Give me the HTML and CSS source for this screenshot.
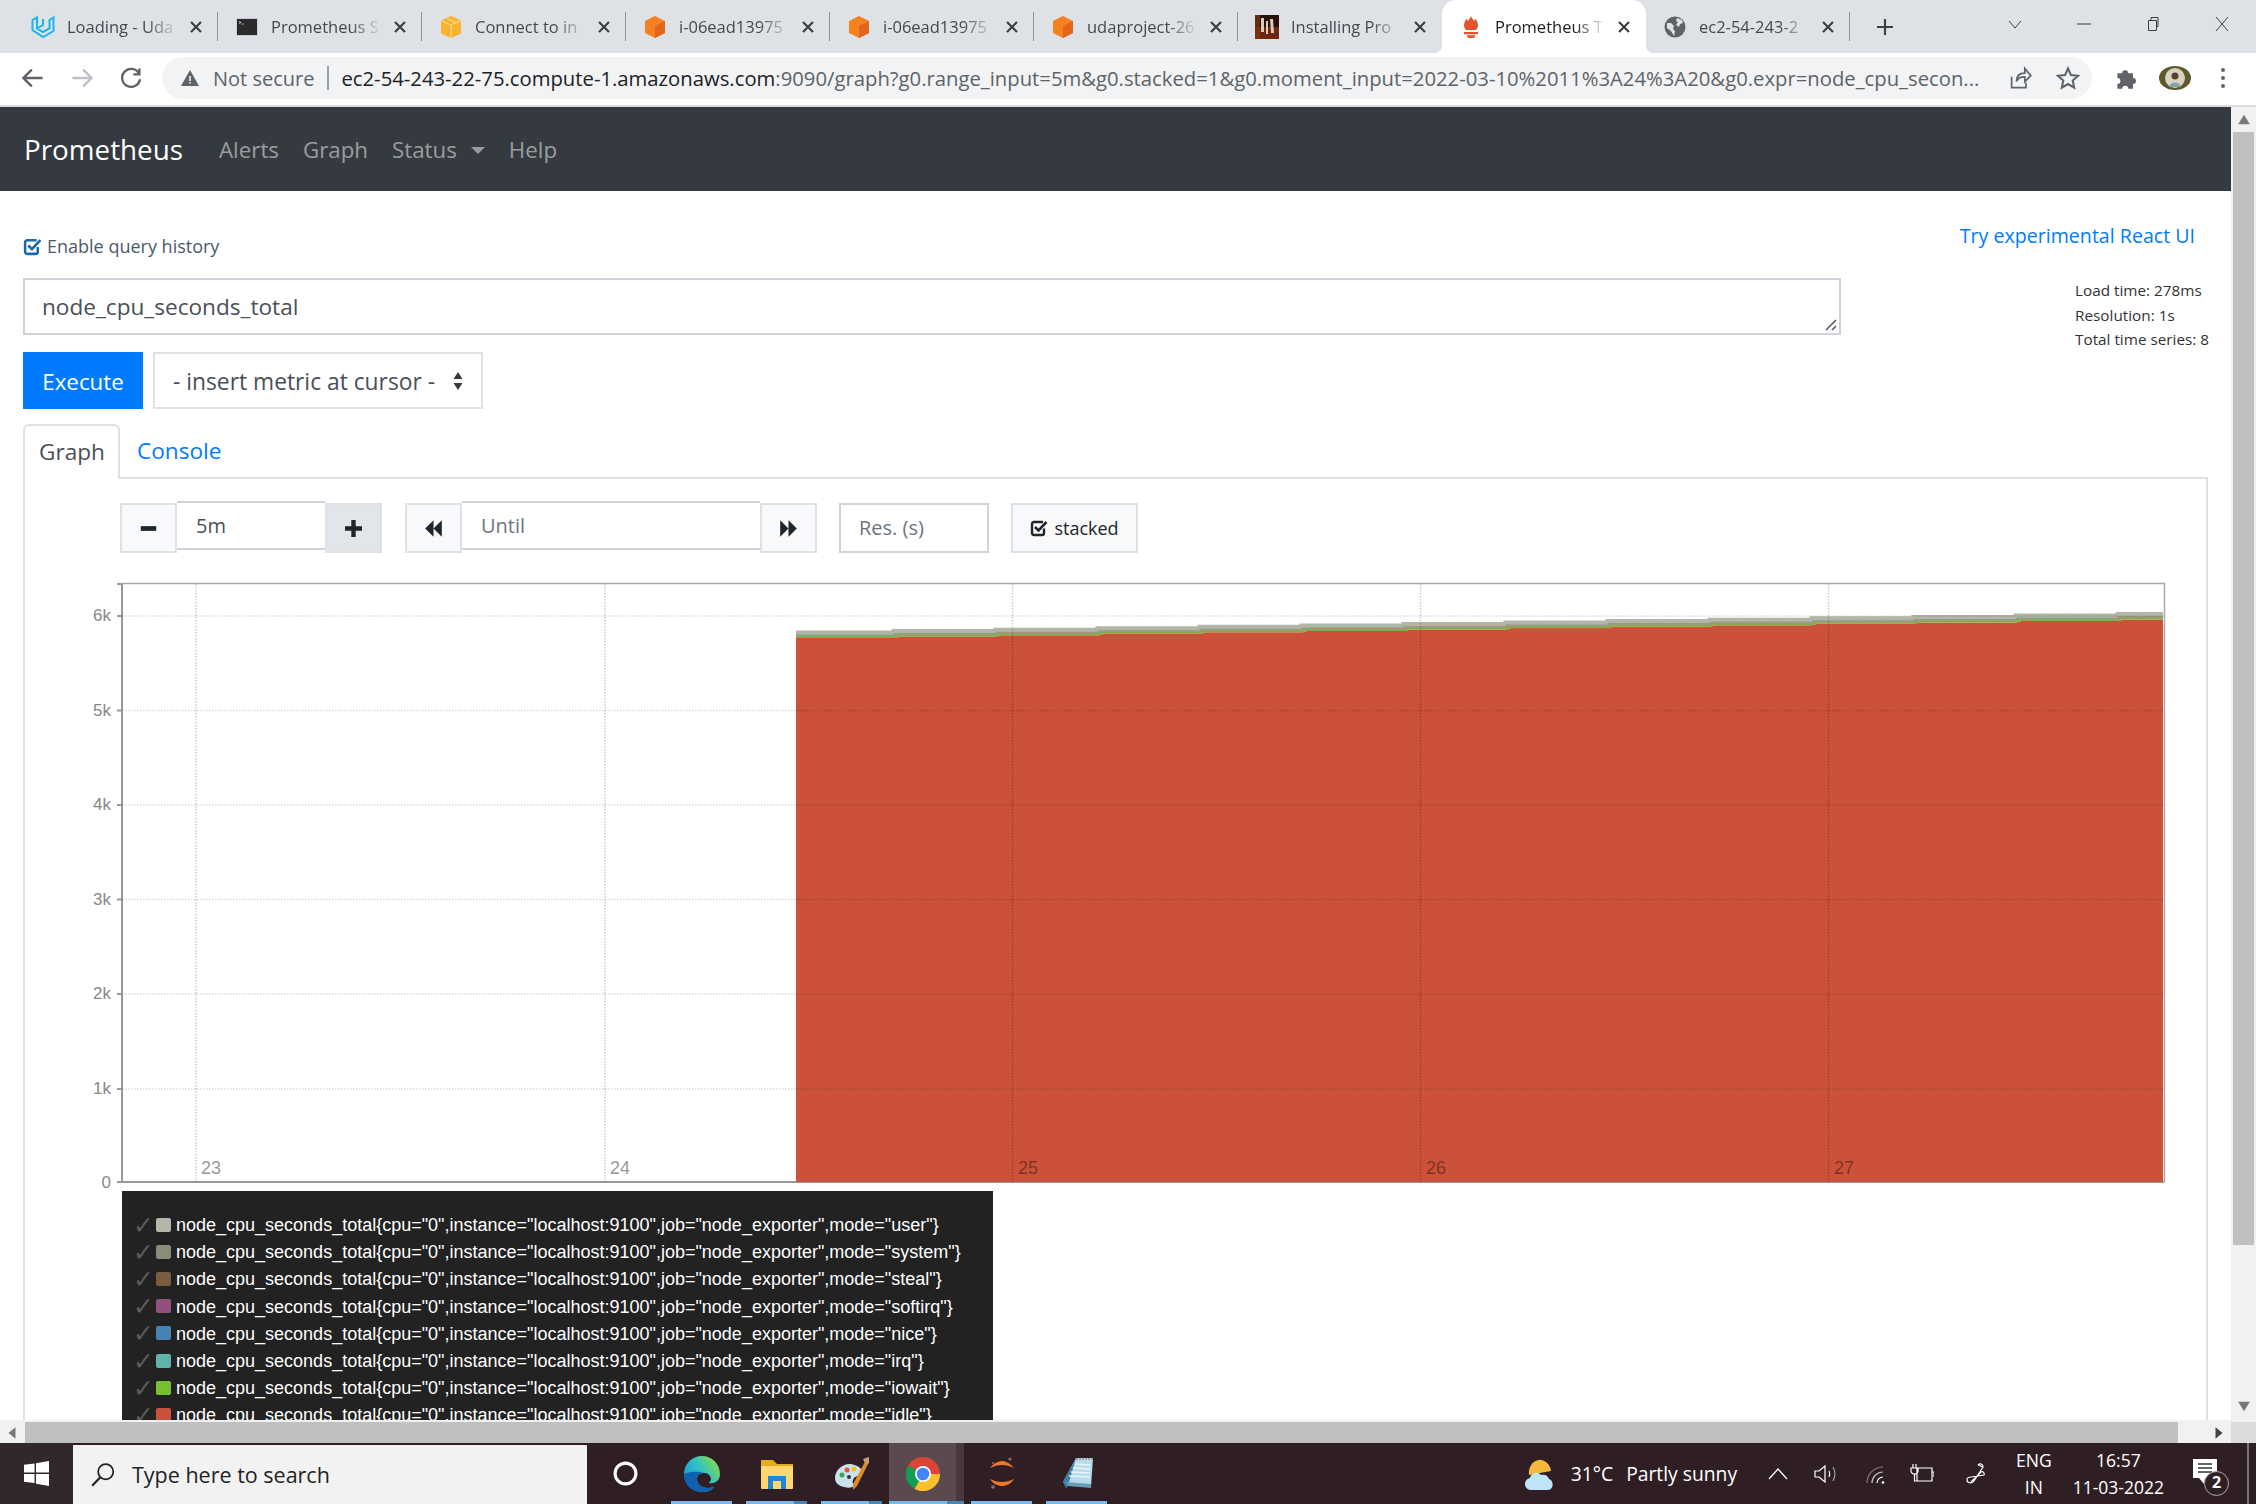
FILE: index.html
```html
<!DOCTYPE html>
<html lang="en">
<head>
    <meta charset="UTF-8">
    <title>Prometheus Time Series Collection and Processing Server</title>
    <link rel="stylesheet" href="styles.css">
</head>
<body>
    <!-- browser tabs -->
    <div class="tabstrip">
        <div class="tab">
            <svg class="favicon" viewBox="0 0 24 24"><path d="M1.500 5v10l10.500 7 10.500-6V2.500l-4 2.500v8.500L12 17l-6-3.500V2.500z M6 13.500l6-3.500V4" fill="none" stroke="#18b6e8" stroke-width="2"/></svg>
            <span class="tab-title">Loading - Uda</span>
            <svg class="tab-close" viewBox="0 0 12 12"><path d="M1 1l10 10m0-10L1 11"/></svg>
        </div>
        <div class="tab">
            <svg class="favicon" viewBox="0 0 24 24"><rect x="1.500" y="3.500" width="21" height="17" fill="#2b2b2b" stroke="#c9ccd1"/><path d="M4 6.500l2 1-2 1M6.500 9h2" fill="none" stroke="#ddd" stroke-width=".8"/></svg>
            <span class="tab-title">Prometheus S</span>
            <svg class="tab-close" viewBox="0 0 12 12"><path d="M1 1l10 10m0-10L1 11"/></svg>
        </div>
        <div class="tab">
            <svg class="favicon" viewBox="0 0 24 24"><path d="M12 1l10 4.500v13L12 23 2 18.500v-13z" fill="#f5b32e"/><path d="M2 5.500L12 10l10-4.500M8 3.500l9 4.200M12 10v13" fill="none" stroke="#fbdd8f" stroke-width="1.100"/></svg>
            <span class="tab-title">Connect to in</span>
            <svg class="tab-close" viewBox="0 0 12 12"><path d="M1 1l10 10m0-10L1 11"/></svg>
        </div>
        <div class="tab">
            <svg class="favicon" viewBox="0 0 24 24"><path d="M12 1l10 5v12l-10 5-10-5V6z" fill="#f58220"/><path d="M12 11l10-5v12l-10 5z" fill="#e4661c"/></svg>
            <span class="tab-title">i-06ead13975</span>
            <svg class="tab-close" viewBox="0 0 12 12"><path d="M1 1l10 10m0-10L1 11"/></svg>
        </div>
        <div class="tab">
            <svg class="favicon" viewBox="0 0 24 24"><path d="M12 1l10 5v12l-10 5-10-5V6z" fill="#f58220"/><path d="M12 11l10-5v12l-10 5z" fill="#e4661c"/></svg>
            <span class="tab-title">i-06ead13975</span>
            <svg class="tab-close" viewBox="0 0 12 12"><path d="M1 1l10 10m0-10L1 11"/></svg>
        </div>
        <div class="tab">
            <svg class="favicon" viewBox="0 0 24 24"><path d="M12 1l10 5v12l-10 5-10-5V6z" fill="#f58220"/><path d="M12 11l10-5v12l-10 5z" fill="#e4661c"/></svg>
            <span class="tab-title">udaproject-26</span>
            <svg class="tab-close" viewBox="0 0 12 12"><path d="M1 1l10 10m0-10L1 11"/></svg>
        </div>
        <div class="tab">
            <svg class="favicon" viewBox="0 0 24 24"><rect width="24" height="24" fill="#2a0f08"/><path d="M0 12h24v12H0z" fill="#6e2512"/><path d="M6 3h3v14H6zM11 6h2v13h-2zM15 4h3l1 14h-3z" fill="#d8cdb8"/><path d="M0 0h5v24H0z" fill="#7a3a14" opacity=".7"/></svg>
            <span class="tab-title">Installing Pro</span>
            <svg class="tab-close" viewBox="0 0 12 12"><path d="M1 1l10 10m0-10L1 11"/></svg>
        </div>
        <div class="tab active">
            <svg class="favicon" viewBox="0 0 24 24"><path d="M12 1c.5 2.500 2.500 3 3 5 .8-.5 1-1.500 1-2.500 2 2 3 4.500 3 7 0 1.700-.8 3-2 4.500H7c-1.200-1.500-2-2.800-2-4.500 0-2.500 1-5 3-7 0 1 .2 2 1 2.500 .5-2 2.500-2.500 3-5z" fill="#e6522c"/><path d="M5 17h14v2.200H5zM7.500 20.200h9L15 23H9z" fill="#e6522c"/></svg>
            <span class="tab-title">Prometheus T</span>
            <svg class="tab-close" viewBox="0 0 12 12"><path d="M1 1l10 10m0-10L1 11"/></svg>
        </div>
        <div class="tab">
            <svg class="favicon" viewBox="0 0 24 24"><circle cx="12" cy="12" r="10.500" fill="#5f6368"/><path d="M4 8l4 0 3 3-1 3 2 2-1 5-3-5-4-3zM14 3l5 2 1 3-3 1-1 3-3-2 2-3-2-1z" fill="#dee1e6"/></svg>
            <span class="tab-title">ec2-54-243-2</span>
            <svg class="tab-close" viewBox="0 0 12 12"><path d="M1 1l10 10m0-10L1 11"/></svg>
        </div>
        <svg class="new-tab" viewBox="0 0 18 18"><path d="M9 1v16M1 9h16"/></svg>
        <div class="window-controls">
            <svg viewBox="0 0 14 14"><path d="M1 4l6 7 6-7"/></svg>
            <svg viewBox="0 0 14 14"><path d="M0 7h14"/></svg>
            <svg viewBox="0 0 14 14"><path d="M2.500 3.500h8v10h-8zM5 3.500V.5h7v9h-1.500"/></svg>
            <svg viewBox="0 0 14 14"><path d="M1 0l12 14M13 0L1 14"/></svg>
        </div>
    </div>

    <!-- address bar -->
    <div class="toolbar">
        <svg class="tool-icon" viewBox="0 0 20 20"><path d="M18 10H3m6-7l-7 7 7 7" stroke="#5f6368"/></svg>
        <svg class="tool-icon" viewBox="0 0 20 20"><path d="M2 10h15m-6-7l7 7-7 7" stroke="#bdc1c6"/></svg>
        <svg class="tool-icon" viewBox="0 0 20 20"><path d="M16.500 6A7.500 7.500 0 1 0 17.500 11M17 2v5h-5" stroke="#5f6368"/></svg>
        <div class="omnibox">
            <svg class="warn-icon" viewBox="0 0 20 20"><path d="M10 2l9 16H1z" fill="#5f6368"/><path d="M9.200 8h1.600v5H9.200zM9.200 14h1.600v1.600H9.200z" fill="#f1f3f4"/></svg>
            <span class="not-secure">Not secure</span>
            <span class="omni-sep"></span>
            <span class="url"><b>ec2-54-243-22-75.compute-1.amazonaws.com</b>:9090/graph?g0.range_input=5m&amp;g0.stacked=1&amp;g0.moment_input=2022-03-10%2011%3A24%3A20&amp;g0.expr=node_cpu_secon...</span>
            <svg class="omni-icon share" viewBox="0 0 20 20"><path d="M3 9v9h12v-4M7 13c0-5 3-7 7-7V2l5 6-5 5V9c-3 0-6 1-7 4z" fill="none" stroke="#5f6368" stroke-width="1.400"/></svg>
            <svg class="omni-icon" viewBox="0 0 20 20"><path d="M10 2l2.400 5.500 6 .6-4.500 4 1.300 5.900-5.200-3-5.200 3 1.300-5.900-4.500-4 6-.6z" fill="none" stroke="#5f6368" stroke-width="1.700"/></svg>
        </div>
        <svg class="puzzle" viewBox="0 0 20 20"><path d="M2 6h4a2.500 2.500 0 1 1 5 0h4v4a2.500 2.500 0 1 1 0 5v4h-4a2.500 2.500 0 1 0-5 0H2v-4a2.500 2.500 0 1 0 0-5z" fill="#5f6368"/></svg>
        <svg class="avatar" viewBox="0 0 32 24"><ellipse cx="16" cy="12" rx="16" ry="12" fill="#5c5a2c"/><ellipse cx="16" cy="12" rx="10" ry="10" fill="#d8d3c0"/><circle cx="16" cy="10" r="3.500" fill="#57422d"/><path d="M10 21c1-6 11-6 12 0z" fill="#86a4a8"/></svg>
        <svg class="kebab" viewBox="0 0 6 24"><circle cx="3" cy="4" r="2"/><circle cx="3" cy="12" r="2"/><circle cx="3" cy="20" r="2"/></svg>
    </div>

    <div class="viewport">
        <div class="page">
            <nav class="navbar">
                <a class="brand">Prometheus</a>
                <a class="nav-link">Alerts</a>
                <a class="nav-link">Graph</a>
                <a class="nav-link status">Status<i class="caret"></i></a>
                <a class="nav-link">Help</a>
            </nav>

            <div class="content">
                <div class="top-row">
                    <label class="history">
                        <svg class="check-box" viewBox="0 0 18 18"><path d="M14 9.500V14a2 2 0 0 1-2 2H4a2 2 0 0 1-2-2V5a2 2 0 0 1 2-2h9" fill="none" stroke="currentColor" stroke-width="2.400"/><path d="M5 8l3.500 3.500L16.500 3" fill="none" stroke="currentColor" stroke-width="2.600"/></svg>
                        Enable query history
                    </label>
                    <a class="react-link">Try experimental React UI</a>
                </div>

                <div class="query-row">
                    <div class="query-left">
                        <div class="expr">node_cpu_seconds_total
                            <svg class="grip" viewBox="0 0 12 12"><path d="M1 11L11 1M7 11l4-4"/></svg>
                        </div>
                        <div class="exec-row">
                            <button class="execute">Execute</button>
                            <div class="metric-select">- insert metric at cursor -
                                <svg class="updown" viewBox="0 0 10 20"><path d="M5 1l4.500 7h-9zM5 19l4.500-7h-9z"/></svg>
                            </div>
                        </div>
                    </div>
                    <div class="stats">
                        <div>Load time: 278ms</div>
                        <div>Resolution: 1s</div>
                        <div>Total time series: 8</div>
                    </div>
                </div>

                <div class="nav-tabs">
                    <span class="tab-link active">Graph</span>
                    <span class="tab-link">Console</span>
                </div>

                <div class="tab-content">
                    <div class="controls">
                        <button class="ctl-btn">
                            <svg viewBox="0 0 16 14"><path d="M1.500 5h13v4h-13z"/></svg>
                        </button>
                        <div class="ctl-input range">5m</div>
                        <button class="ctl-btn hover">
                            <svg viewBox="0 0 14 14"><path d="M5.200 0h3.600v5.200H14v3.600H8.800V14H5.200V8.800H0V5.200h5.200z"/></svg>
                        </button>
                        <button class="ctl-btn gap">
                            <svg viewBox="0 0 16 14"><path d="M8 0v14L1 7zM15 0v14L8 7z"/></svg>
                        </button>
                        <div class="ctl-input until">Until</div>
                        <button class="ctl-btn">
                            <svg viewBox="0 0 16 14"><path d="M1 0v14l7-7zM8 0v14l7-7z"/></svg>
                        </button>
                        <div class="res-input">Res. (s)</div>
                        <button class="stacked">
                            <svg class="check-box" viewBox="0 0 18 18"><path d="M14 9.500V14a2 2 0 0 1-2 2H4a2 2 0 0 1-2-2V5a2 2 0 0 1 2-2h9" fill="none" stroke="currentColor" stroke-width="2.400"/><path d="M5 8l3.500 3.500L16.500 3" fill="none" stroke="currentColor" stroke-width="2.600"/></svg>
                            stacked
                        </button>
                    </div>

                    <!-- viewBox uses page coordinates -->
                    <svg class="chart" viewBox="80 575 2100 616">
                        <defs>
                            <path id="top-edge" d="M796 638H895V636.600H997V635.200H1099V633.700H1201V632.300H1303V630.900H1405V629.500H1507V628.100H1609V626.600H1711V625.200H1813V623.800H1915V622.400H2017V621H2119V619.500H2163"/>
                        </defs>
                        <path class="frame" d="M122 1182V583.500H2164.500V1182"/>
                        <path class="axis" d="M122 584V1182H2164M117 584h5M117 616h5M117 710.500h5M117 805h5M117 899.500h5M117 994h5M117 1089h5M117 1182h5"/>
                        <path class="area" d="M796 1182V638H895V636.600H997V635.200H1099V633.700H1201V632.300H1303V630.900H1405V629.500H1507V628.100H1609V626.600H1711V625.200H1813V623.800H1915V622.400H2017V621H2119V619.500H2163V1182z"/>
                        <use href="#top-edge" class="band-light" transform="translate(0,-4)"/>
                        <use href="#top-edge" class="band-dark" transform="translate(0,-2)"/>
                        <use href="#top-edge" class="band-green" transform="translate(0,-0.700)"/>
                        <g class="grid">
                            <path d="M122 616H2164M122 710.500H2164M122 805H2164M122 899.500H2164M122 994H2164M122 1089H2164"/>
                            <path d="M196 584V1182M605 584V1182M1012.500 584V1182M1420.500 584V1182M1828.500 584V1182"/>
                        </g>
                        <g class="y-labels">
                            <text x="111" y="621">6k</text>
                            <text x="111" y="716">5k</text>
                            <text x="111" y="810">4k</text>
                            <text x="111" y="905">3k</text>
                            <text x="111" y="999">2k</text>
                            <text x="111" y="1094">1k</text>
                            <text x="111" y="1188">0</text>
                        </g>
                        <g class="x-labels">
                            <text x="201" y="1174">23</text>
                            <text x="610" y="1174">24</text>
                            <text x="1018" y="1174">25</text>
                            <text x="1426" y="1174">26</text>
                            <text x="1834" y="1174">27</text>
                        </g>
                    </svg>

                    <div class="legend">
                        <div class="legend-row"><span class="tick">✓</span><i class="swatch s-user"></i>node_cpu_seconds_total{cpu="0",instance="localhost:9100",job="node_exporter",mode="user"}</div>
                        <div class="legend-row"><span class="tick">✓</span><i class="swatch s-system"></i>node_cpu_seconds_total{cpu="0",instance="localhost:9100",job="node_exporter",mode="system"}</div>
                        <div class="legend-row"><span class="tick">✓</span><i class="swatch s-steal"></i>node_cpu_seconds_total{cpu="0",instance="localhost:9100",job="node_exporter",mode="steal"}</div>
                        <div class="legend-row"><span class="tick">✓</span><i class="swatch s-softirq"></i>node_cpu_seconds_total{cpu="0",instance="localhost:9100",job="node_exporter",mode="softirq"}</div>
                        <div class="legend-row"><span class="tick">✓</span><i class="swatch s-nice"></i>node_cpu_seconds_total{cpu="0",instance="localhost:9100",job="node_exporter",mode="nice"}</div>
                        <div class="legend-row"><span class="tick">✓</span><i class="swatch s-irq"></i>node_cpu_seconds_total{cpu="0",instance="localhost:9100",job="node_exporter",mode="irq"}</div>
                        <div class="legend-row"><span class="tick">✓</span><i class="swatch s-iowait"></i>node_cpu_seconds_total{cpu="0",instance="localhost:9100",job="node_exporter",mode="iowait"}</div>
                        <div class="legend-row"><span class="tick">✓</span><i class="swatch s-idle"></i>node_cpu_seconds_total{cpu="0",instance="localhost:9100",job="node_exporter",mode="idle"}</div>
                    </div>
                </div>
            </div>
        </div>
        <div class="vscroll">
            <svg class="arrow" viewBox="0 0 12 12"><path d="M6 2l5 8H1z"/></svg>
            <div class="vthumb"></div>
            <svg class="arrow" viewBox="0 0 12 12"><path d="M6 10l5-8H1z"/></svg>
        </div>
    </div>

    <div class="hscroll">
        <svg class="arrow" viewBox="0 0 12 12"><path d="M3 6l6-5v10z"/></svg>
        <div class="hthumb"></div>
        <svg class="arrow right" viewBox="0 0 12 12"><path d="M9 6L3 1v10z"/></svg>
        <div class="corner"></div>
    </div>

    <!-- windows taskbar -->
    <div class="taskbar">
        <div class="start">
            <svg viewBox="0 0 26 26"><path d="M0 4l11-1.500V12H0zM12.500 2.300L26 0v12H12.500zM0 13.500h11V23L0 21.500zM12.500 13.500H26V26l-13.500-2.300z" fill="#fff"/></svg>
        </div>
        <div class="search">
            <svg viewBox="0 0 24 24"><circle cx="14.500" cy="9" r="7" fill="none" stroke="#222" stroke-width="1.600"/><path d="M9.500 14L2 22" stroke="#222" stroke-width="2"/></svg>
            <span>Type here to search</span>
        </div>
        <div class="apps">
            <div class="app cortana">
                <svg viewBox="0 0 24 24"><circle cx="12" cy="12" r="10" fill="none" stroke="#fff" stroke-width="3"/></svg>
            </div>
            <div class="app open">
                <svg viewBox="0 0 36 36">
                    <defs>
                        <linearGradient id="edge-top" x1="0" y1="1" x2="1" y2="0.300"><stop offset="0" stop-color="#1287d8"/><stop offset=".6" stop-color="#2fc1c9"/><stop offset="1" stop-color="#7fd84f"/></linearGradient>
                    </defs>
                    <path d="M18 0C8 0 0 8 0 18c0 11 9 18 18 18 6 0 10-2 12-5-9 3-17-1-17-8 0-4 3-6 7-6 6 0 7 5 7 6 0 2-2 3-2 4 4 1 11-1 11-9C36 8 28 0 18 0z" fill="url(#edge-top)"/>
                    <path d="M0 18c0 11 9 18 18 18 6 0 10-2 12-5-9 3-17-1-17-8 0-4 3-6 7-6-9-3-18 0-20 1z" fill="#0f62b0"/>
                </svg>
            </div>
            <div class="app open stack">
                <svg viewBox="0 0 36 36"><path d="M2 4h12l4 4h16v24H2z" fill="#e9a91f"/><path d="M2 10h32v22a1 1 0 0 1-1 1H3a1 1 0 0 1-1-1z" fill="#fcd772"/><path d="M9 33V20h18v13h-5v-8h-8v8z" fill="#1f87d6"/></svg>
            </div>
            <div class="app open stack">
                <svg viewBox="0 0 36 36"><path d="M1 22c0-8 8-15 16-14 5 1 9 3 11 6l-3 6c-3 0-5 1-6 4-1 2 0 4 1 6-2 2-6 2-10 1-5-1-9-4-9-9z" fill="#c8e2ee"/><circle cx="8" cy="19" r="2.500" fill="#3aa655"/><circle cx="13" cy="14" r="2.500" fill="#e8512f"/><circle cx="20" cy="13" r="2.500" fill="#f3c02c"/><circle cx="15" cy="21" r="2" fill="#333"/><path d="M32 4l3 2-12 24-4 4 0-6z" fill="#e08a2a"/><path d="M29 3l6-2 0 6-3 2z" fill="#c9a46a"/></svg>
            </div>
            <div class="app open active stack">
                <svg viewBox="0 0 36 36"><circle cx="18" cy="18" r="17" fill="#db4437"/><path d="M18 18h17a17 17 0 0 1-25.500 14.700z" fill="#fbc02d"/><path d="M18 18L9.500 32.700A17 17 0 0 1 1 18c0-3 1-6 2.300-8.500z" fill="#0f9d58"/><circle cx="18" cy="18" r="8" fill="#fff"/><circle cx="18" cy="18" r="6.300" fill="#4285f4"/></svg>
            </div>
            <div class="app open">
                <svg viewBox="0 0 36 36"><path d="M6 12c3-4 8-7 12-7s9 3 12 7c-4-2-8-3-12-3s-8 1-12 3zM6 23c4 2 8 3 12 3s8-1 12-3c-3 5-8 7-12 7s-9-2-12-7z" fill="#f37626"/><circle cx="26" cy="3" r="1.600" fill="#777"/><circle cx="9" cy="31" r="1.800" fill="#777"/><circle cx="9" cy="7" r="1" fill="#777"/></svg>
            </div>
            <div class="app open">
                <svg viewBox="0 0 36 36"><path d="M17 2h17l-2 29-28-5z" fill="#b9dcea"/><path d="M17 2L4 26l3 6 2-2z" fill="#3f7fa6"/><path d="M9 30l23 2 0-4-25-2z" fill="#6a9cb8"/><path d="M16 8l16 1M14 12l17 1M12 16l19 1M10 20l21 1" stroke="#e7f3f9" stroke-width="1.300" fill="none"/><path d="M17 3h17" stroke="#9aa5aa" stroke-width="2" stroke-dasharray="2 1"/></svg>
            </div>
        </div>
        <div class="tray">
            <svg class="weather" viewBox="0 0 30 34"><path d="M4 18a11 13 0 1 1 22-4z" fill="#f6b73c"/><path d="M7 33a6 6 0 0 1-2-12c1-5 8-7 11-3 3-1 7 0 8 4 5 1 5 11-1 11z" fill="#bfe4f7"/></svg>
            <span class="temp">31°C</span>
            <span class="sky">Partly sunny</span>
            <svg class="tray-icon chevron" viewBox="0 0 24 24"><path d="M3 17l9-10 9 10"/></svg>
            <svg class="tray-icon speaker" viewBox="0 0 24 24"><path d="M1 9h4l6-5v16l-6-5H1z"/><path d="M15 9c1 2 1 4 0 6" /><path d="M19 5c2.500 4.500 2.500 9.500 0 14" stroke-opacity=".55"/></svg>
            <svg class="tray-icon wifi" viewBox="0 0 24 24"><path d="M3 21a16 16 0 0 1 16-16" stroke-opacity=".4"/><path d="M8 21a11 11 0 0 1 11-11" stroke-opacity=".7"/><path d="M13 21a6 6 0 0 1 6-6"/><circle cx="19" cy="20.500" r="1.300" fill="#fff" stroke="none"/></svg>
            <svg class="tray-icon plug" viewBox="0 0 24 24"><path d="M7 6h15v13H7zM22 10h2v5M3 2v4M6 2v4M1 6h7v3c0 2-2 3-3.500 3S1 11 1 9zM4.500 12v7H7"/></svg>
            <svg class="tray-icon pen" viewBox="0 0 24 24"><path d="M14 3c2-2 5-1 5 2l-9 14c-2 3-7 2-7-1 0-2 2-3 4-3l13-2c1-2-1-4-3-3L7 20M14 3l5 2"/></svg>
            <div class="lang">ENG<br>IN</div>
            <div class="clock">16:57<br>11-03-2022</div>
            <div class="notify">
                <svg viewBox="0 0 24 26"><path d="M0 0h24v19H12l-1 6-5-6H0z" fill="#fff"/><path d="M5 5h14M5 9h14M5 13h14" stroke="#333" stroke-width="1.500"/></svg>
                <span class="badge">2</span>
            </div>
        </div>
    </div>
</body>
</html>
```

FILE: styles.css
```css
* {
    box-sizing: border-box;
}
html, body {
    margin: 0;
    padding: 0;
}
body {
    width: 2256px;
    height: 1504px;
    overflow: hidden;
    display: flex;
    flex-direction: column;
    font-family: "Open Sans", "Noto Sans", sans-serif;
    background: #fff;
}

/* browser tabs */
.tabstrip {
    height: 53px;
    flex: none;
    display: flex;
    align-items: center;
    padding-left: 14px;
    background: #dee1e6;
}
.tab {
    position: relative;
    width: 204px;
    height: 53px;
    display: flex;
    align-items: center;
    padding-left: 17px;
    font-size: 16.500px;
    color: #45494e;
}
.tab::after {
    content: "";
    position: absolute;
    right: 0;
    top: 12px;
    height: 29px;
    border-right: 1.500px solid #8f9296;
}
.tab:nth-child(7)::after {
    display: none;
}
.tab.active {
    background: #fff;
    color: #202124;
    border-radius: 14px 14px 0 0;
}
.tab.active::before, .tab.active::after {
    content: "";
    position: absolute;
    top: auto;
    bottom: 0;
    width: 8px;
    height: 8px;
    border: none;
}
.tab.active::before {
    left: -8px;
    background: radial-gradient(circle at 0 0, transparent 8px, #fff 8.500px);
}
.tab.active::after {
    right: -8px;
    background: radial-gradient(circle at 100% 0, transparent 8px, #fff 8.500px);
}
.favicon {
    width: 24px;
    height: 24px;
    flex: none;
}
.tab-title {
    width: 111px;
    flex: none;
    margin-left: 12px;
    white-space: nowrap;
    -webkit-mask-image: linear-gradient(to right, #000 72%, transparent 100%);
    mask-image: linear-gradient(to right, #000 72%, transparent 100%);
}
.tab-close {
    width: 12px;
    height: 12px;
    margin-left: 12px;
    flex: none;
    fill: none;
    stroke: #3c4043;
    stroke-width: 2.200;
}
.new-tab {
    width: 18px;
    height: 18px;
    margin-left: 26px;
    fill: none;
    stroke: #3c4043;
    stroke-width: 2.200;
}
.window-controls {
    margin-left: auto;
    display: flex;
    gap: 55px;
    padding-right: 27px;
    margin-top: -5px;
}
.window-controls svg {
    width: 14px;
    height: 14px;
    fill: none;
    stroke: #3c4043;
    stroke-width: 1;
}

/* address bar */
.toolbar {
    height: 54px;
    flex: none;
    display: flex;
    align-items: center;
    padding: 0 0 2px 21px;
    background: #fff;
    border-bottom: 2px solid #dadce0;
}
.tool-icon {
    width: 24px;
    height: 24px;
    margin-right: 25px;
    fill: none;
    stroke-width: 2;
}
.omnibox {
    width: 1930px;
    height: 42px;
    flex: none;
    margin-left: -6px;
    display: flex;
    align-items: center;
    padding-left: 18px;
    border-radius: 21px;
    background: #f1f3f4;
    font-size: 20px;
    color: #5f6368;
}
.warn-icon {
    width: 20px;
    height: 20px;
    margin-right: 13px;
}
.not-secure {
    white-space: nowrap;
}
.omni-sep {
    width: 2px;
    height: 24px;
    margin: 0 12px 0 13px;
    background: #9aa0a6;
}
.url {
    width: 1642px;
    flex: none;
    font-size: 20.280px;
    white-space: nowrap;
}
.url b {
    font-weight: 400;
    color: #202124;
}
.omni-icon {
    width: 24px;
    height: 24px;
    margin-left: 24px;
}
.omni-icon.share {
    margin-left: 25px;
}
.puzzle {
    width: 24px;
    height: 24px;
    margin-left: 23px;
}
.avatar {
    width: 32px;
    height: 24px;
    margin-left: 20px;
}
.kebab {
    width: 6px;
    height: 24px;
    margin-left: 29px;
    fill: #5f6368;
}

/* page */
.viewport {
    height: 1313px;
    flex: none;
    display: flex;
}
.page {
    flex: 1;
    overflow: hidden;
}
.vscroll {
    width: 25px;
    flex: none;
    display: flex;
    flex-direction: column;
    align-items: center;
    background: #f1f1f1;
}
.vscroll .arrow {
    width: 14px;
    height: 25px;
    fill: #777;
}
.vthumb {
    width: 21px;
    height: 1113px;
    background: #c0c0c0;
}
.vthumb + .arrow {
    margin-top: auto;
    margin-bottom: 1px;
}
.hscroll {
    height: 23px;
    flex: none;
    display: flex;
    align-items: center;
    padding-top: 2px;
    background: #f1f1f1;
}
.hscroll .arrow {
    width: 14px;
    height: 14px;
    margin: 0 6px 0 5px;
    fill: #777;
}
.hthumb {
    width: 2153px;
    height: 21px;
    background: #c0c0c0;
}
.hscroll .arrow.right {
    margin: 0 0 0 34px;
    fill: #444;
}
.corner {
    flex: 1;
    height: 21px;
    margin-left: 5px;
    background: #dcdcdc;
}

.navbar {
    height: 84px;
    display: flex;
    align-items: center;
    padding-left: 24px;
    background: #343a40;
}
.brand {
    font-size: 27.800px;
    color: #fff;
    margin-right: 36px;
}
.nav-link {
    font-size: 22.300px;
    color: rgba(255, 255, 255, 0.5);
    margin-right: 24px;
}
.caret {
    display: inline-block;
    margin-left: 14px;
    vertical-align: 4px;
    border-top: 7px solid rgba(255, 255, 255, 0.5);
    border-left: 7px solid transparent;
    border-right: 7px solid transparent;
}

.content {
    padding: 0 23px;
}
.top-row {
    height: 87px;
    display: flex;
    justify-content: space-between;
    align-items: flex-start;
}
.history {
    margin-top: 43px;
    display: flex;
    align-items: center;
    gap: 5px;
    font-size: 18px;
    line-height: 24px;
    color: #4a5a68;
}
.history .check-box {
    width: 19px;
    height: 19px;
    color: #1a6aab;
}
.check-box {
    width: 18px;
    height: 18px;
}
.react-link {
    margin: 31px 13px 0 0;
    font-size: 19.600px;
    line-height: 28px;
    color: #007bff;
}
.query-row {
    display: flex;
    justify-content: space-between;
}
.query-left {
    width: 1818px;
}
.expr {
    position: relative;
    height: 57px;
    padding-left: 17px;
    border: 2px solid #ced4da;
    font-size: 22.600px;
    line-height: 53px;
    color: #495057;
}
.grip {
    position: absolute;
    right: 2px;
    bottom: 2px;
    width: 12px;
    height: 12px;
    fill: none;
    stroke: #555;
    stroke-width: 1.500;
}
.exec-row {
    display: flex;
    gap: 10px;
    margin-top: 17px;
}
.execute {
    width: 120px;
    height: 57px;
    border: none;
    padding: 1px 0 0;
    background: #007bff;
    color: #fff;
    font: inherit;
    font-size: 22.300px;
}
.metric-select {
    width: 330px;
    height: 57px;
    display: flex;
    align-items: center;
    padding: 1px 0 0 18px;
    border: 2px solid #dee2e6;
    font-size: 22.800px;
    color: #495057;
    white-space: nowrap;
}
.updown {
    width: 12px;
    height: 20px;
    margin-left: 17px;
    fill: #343a40;
}
.stats {
    width: 133px;
    font-size: 15.300px;
    line-height: 24.500px;
    color: #333;
    white-space: nowrap;
}
.nav-tabs {
    display: flex;
    height: 55px;
    margin-top: 15px;
    border-bottom: 2px solid #dee2e6;
}
.tab-link {
    height: 55px;
    padding: 0 15px 0 17px;
    font-size: 22.600px;
    line-height: 54px;
    color: #007bff;
}
.tab-link.active {
    width: 97px;
    color: #495057;
    background: #fff;
    border: 2px solid #dee2e6;
    border-bottom: none;
    border-radius: 6px 6px 0 0;
    padding: 0 14px;
    line-height: 52px;
}
.tab-content {
    padding-top: 22px;
    border-left: 2px solid #dee2e6;
    border-right: 2px solid #dee2e6;
}
.controls {
    display: flex;
    align-items: flex-start;
    height: 52px;
    padding-left: 95px;
}
.ctl-btn {
    width: 57px;
    height: 50px;
    margin-top: 2px;
    border: 2px solid #dee2e6;
    background: #f8f9fa;
    display: flex;
    align-items: center;
    justify-content: center;
    padding: 0;
}
.ctl-btn svg {
    width: 19px;
    height: 17px;
    fill: #212529;
}
.ctl-btn.hover {
    background: #e2e6ea;
}
.ctl-btn.gap {
    margin-left: 23px;
}
.ctl-input {
    height: 49px;
    padding-left: 19px;
    border: 2px solid #ced4da;
    border-width: 2px 0;
    font-size: 20px;
    line-height: 45px;
    color: #495057;
}
.range {
    width: 148px;
}
.until {
    width: 298px;
    color: #6c757d;
}
.res-input {
    width: 150px;
    height: 50px;
    margin: 2px 0 0 22px;
    padding-left: 18px;
    border: 2px solid #ced4da;
    font-size: 20px;
    line-height: 46px;
    color: #6c757d;
}
.stacked {
    width: 127px;
    height: 50px;
    margin: 2px 0 0 22px;
    border: 2px solid #dee2e6;
    background: #f8f9fa;
    display: flex;
    align-items: center;
    justify-content: center;
    gap: 6px;
    padding: 0;
    font: inherit;
    font-size: 18px;
    color: #212529;
}

/* chart */
.chart {
    display: block;
    width: 2100px;
    height: 616px;
    margin: 22px 0 0 55px;
}
.area {
    fill: #cb513a;
}
#top-edge {
    fill: none;
}
.band-light {
    stroke: #b4b5a9;
    stroke-width: 7;
}
.band-dark {
    stroke: #9a9b84;
    stroke-width: 3;
}
.band-green {
    stroke: #7fb23c;
    stroke-width: 1.500;
}
.grid path {
    fill: none;
    stroke: rgba(0, 0, 0, 0.2);
    stroke-width: 1.500;
    stroke-dasharray: 1.500 1.500;
}
.grid path:first-child {
    stroke: rgba(0, 0, 0, 0.15);
}
.frame {
    fill: none;
    stroke: #aaa;
    stroke-width: 1.500;
}
.axis {
    fill: none;
    stroke: #999;
    stroke-width: 2;
}
.y-labels text {
    font-family: "Liberation Sans", Arial, sans-serif;
    font-size: 17px;
    fill: #888;
    text-anchor: end;
}
.x-labels text {
    font-family: "Liberation Sans", Arial, sans-serif;
    font-size: 18px;
    fill: #999;
}
.x-labels text:nth-child(n+3) {
    fill: rgba(0, 0, 0, 0.4);
}

/* legend */
.legend {
    width: 871px;
    margin-left: 97px;
    padding: 21px 0 20px 13px;
    background: #222;
    font-family: "Liberation Sans", Arial, sans-serif;
    font-size: 18px;
    color: #fff;
}
.legend-row {
    display: flex;
    align-items: center;
    height: 27.200px;
    white-space: nowrap;
}
.tick {
    width: 21px;
    margin-left: -2px;
    padding-right: 0;
    flex: none;
    font-family: "DejaVu Sans", sans-serif;
    font-size: 25px;
    line-height: 20px;
    color: #5c5c5c;
}
.swatch {
    width: 15px;
    height: 14px;
    margin: -2px 5px 0 2px;
    border-radius: 2px;
}
.s-user { background: #b5b6aa; }
.s-system { background: #8b8c78; }
.s-steal { background: #7a5c3e; }
.s-softirq { background: #91517c; }
.s-nice { background: #4682b4; }
.s-irq { background: #5fb3a8; }
.s-iowait { background: #76c034; }
.s-idle { background: #cb513a; }

/* taskbar */
.taskbar {
    height: 61px;
    flex: none;
    display: flex;
    align-items: stretch;
    background: #2f1f24;
    color: #fff;
}
.start {
    width: 73px;
    display: flex;
    align-items: center;
    justify-content: center;
    background: #302829;
}
.start svg {
    width: 25px;
    height: 25px;
}
.search {
    width: 514px;
    margin-top: 2px;
    display: flex;
    align-items: center;
    padding-left: 17px;
    background: #f2f2f2;
    color: #222;
    font-size: 21.500px;
}
.search svg {
    width: 26px;
    height: 26px;
    margin-right: 16px;
}
.apps {
    display: flex;
}
.app {
    width: 75px;
    display: flex;
    align-items: center;
    justify-content: center;
    position: relative;
}
.app svg {
    width: 36px;
    height: 36px;
}
.app.cortana {
    width: 77px;
}
.app.cortana svg {
    width: 25px;
    height: 25px;
}
.app.open::after {
    content: "";
    position: absolute;
    left: 7px;
    right: 7px;
    bottom: 0;
    height: 3px;
    background: #76b9ed;
}
.app.stack::after {
    background: linear-gradient(to right, #76b9ed 78%, #4a86b4 78%);
}
.app.active {
    background: #5a4a4e;
    border-right: 8px solid #46383c;
}
.app.active::after {
    left: 0;
    right: -8px;
}
.tray {
    margin-left: auto;
    margin-right: 7px;
    display: flex;
    align-items: center;
    padding-right: 30px;
    border-right: 2px solid #777;
    font-size: 19.300px;
}
.weather {
    width: 30px;
    height: 34px;
    margin-right: 16px;
}
.temp {
    margin-right: 13px;
}
.sky {
    margin-right: 29px;
}
.tray-icon {
    width: 24px;
    height: 24px;
    fill: none;
    stroke: #fff;
    stroke-width: 1.200;
}
.chevron { margin-right: 24px; }
.speaker { margin-right: 26px; }
.wifi { margin-right: 22px; }
.plug { margin-right: 30px; }
.lang, .clock {
    font-size: 17.500px;
    line-height: 27px;
    text-align: center;
}
.lang {
    margin-left: 28px;
}
.clock {
    margin-left: 21px;
}
.notify {
    position: relative;
    width: 24px;
    height: 26px;
    margin-left: 29px;
    margin-top: -4px;
}
.notify svg {
    width: 24px;
    height: 26px;
}
.badge {
    position: absolute;
    left: 11px;
    top: 12px;
    width: 25px;
    height: 25px;
    border-radius: 50%;
    border: 1.500px solid #aaa;
    background: #2f1f24;
    font-size: 16px;
    font-weight: 700;
    line-height: 21px;
    text-align: center;
}
```
